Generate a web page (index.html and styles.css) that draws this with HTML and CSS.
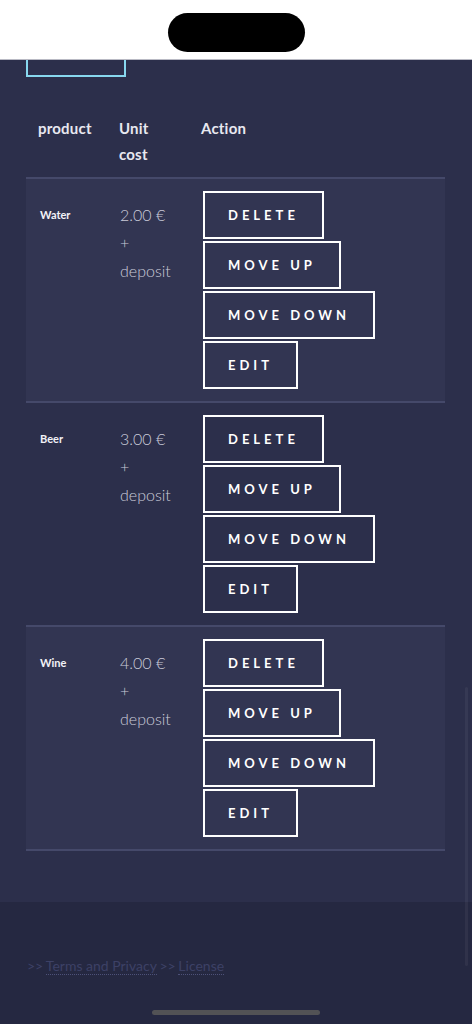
FILE: index.html
```html
<!DOCTYPE html>
<html lang="en">
<head>
<meta charset="utf-8">
<title>Products</title>
<link rel="stylesheet" href="styles.css">
</head>
<body>
<div class="statusbar"><div class="island"></div></div>
<main class="main">
  <div class="topbox"></div>
  <div class="table">
    <div class="thead">
      <div class="th">product</div>
      <div class="th">Unit<br>cost</div>
      <div class="th">Action</div>
    </div>
    <div class="row odd">
      <div class="td name">Water</div>
      <div class="td price">2.00 €<br>+<br>deposit</div>
      <div class="td actions">
        <button class="btn">Delete</button>
        <button class="btn">Move up</button>
        <button class="btn">Move down</button>
        <button class="btn">Edit</button>
      </div>
    </div>
    <div class="row">
      <div class="td name">Beer</div>
      <div class="td price">3.00 €<br>+<br>deposit</div>
      <div class="td actions">
        <button class="btn">Delete</button>
        <button class="btn">Move up</button>
        <button class="btn">Move down</button>
        <button class="btn">Edit</button>
      </div>
    </div>
    <div class="row odd last">
      <div class="td name">Wine</div>
      <div class="td price">4.00 €<br>+<br>deposit</div>
      <div class="td actions">
        <button class="btn">Delete</button>
        <button class="btn">Move up</button>
        <button class="btn">Move down</button>
        <button class="btn">Edit</button>
      </div>
    </div>
  </div>
</main>
<footer class="footer">
  <span class="sep">&gt;&gt;</span> <a class="flink" href="#">Terms and Privacy</a> <span class="sep">&gt;&gt;</span> <a class="flink" href="#">License</a>
</footer>
<div class="scrollbar"></div>
<div class="home"></div>
</body>
</html>
```
FILE: styles.css
```css
html, body {
  margin: 0;
  padding: 0;
}
body {
  background: #252841;
  font-family: Lato, "Open Sans", sans-serif;
  width: 472px;
  min-height: 1024px;
  position: relative;
  overflow: hidden;
}
.statusbar {
  background: #ffffff;
  border-bottom: 1px solid #b9bac4;
  display: flex;
  justify-content: center;
  padding-top: 13px;
  box-sizing: border-box;
  height: 60px;
}
.island {
  width: 137px;
  height: 39px;
  border-radius: 20px;
  background: #000;
}
.main {
  background: #2c2f4b;
  padding: 0 27px 51px 26px;
}
.topbox {
  width: 96px;
  height: 15px;
  border: 2px solid #88d8ef;
  border-top: none;
}
.thead {
  display: grid;
  grid-template-columns: 81px 82px 1fr;
  padding-top: 38px;
  padding-bottom: 10px;
}
.th {
  padding-left: 12px;
  color: #e8e8f0;
  font-weight: 700;
  font-size: 15px;
  line-height: 26px;
  letter-spacing: 0.2px;
}
.row {
  display: grid;
  grid-template-columns: 81px 82px 1fr;
  border-top: 2px solid #45496a;
  height: 224px;
  box-sizing: border-box;
}
.row.odd {
  background: #323552;
}
.row.last {
  border-bottom: 2px solid #45496a;
  height: 226px;
}
.td {
  padding-top: 22px;
}
.name {
  padding-left: 14px;
  color: #f2f2f7;
  font-weight: 700;
  font-size: 11px;
  line-height: 28px;
}
.price {
  padding-left: 13px;
  color: #cacbd9;
  font-weight: 300;
  font-size: 16px;
  line-height: 28px;
}
.actions {
  padding-top: 12px;
  padding-left: 14px;
  display: flex;
  flex-direction: column;
  align-items: flex-start;
  gap: 2px;
}
.btn {
  height: 48px;
  box-sizing: border-box;
  border: 2px solid #ffffff;
  background: transparent;
  color: #ffffff;
  font-family: Lato, "Open Sans", sans-serif;
  font-weight: 700;
  font-size: 13px;
  letter-spacing: 4px;
  text-transform: uppercase;
  padding: 0 23px 0 23px;
  margin: 0;
  cursor: pointer;
}
.footer {
  height: 121px;
  box-sizing: border-box;
  padding: 54px 0 0 27px;
  font-size: 14px;
  line-height: 20px;
  color: #3d4166;
  word-spacing: -1px;
}
.flink {
  color: #3d4166;
  text-decoration: none;
  border-bottom: 1px dotted #4d5178;
  word-spacing: 0;
}
.scrollbar {
  position: absolute;
  left: 465px;
  top: 687px;
  width: 3px;
  height: 279px;
  border-radius: 2px;
  background: rgba(255, 255, 255, 0.05);
}
.home {
  position: absolute;
  left: 152px;
  top: 1010px;
  width: 168px;
  height: 5px;
  border-radius: 3px;
  background: #525255;
}
```
